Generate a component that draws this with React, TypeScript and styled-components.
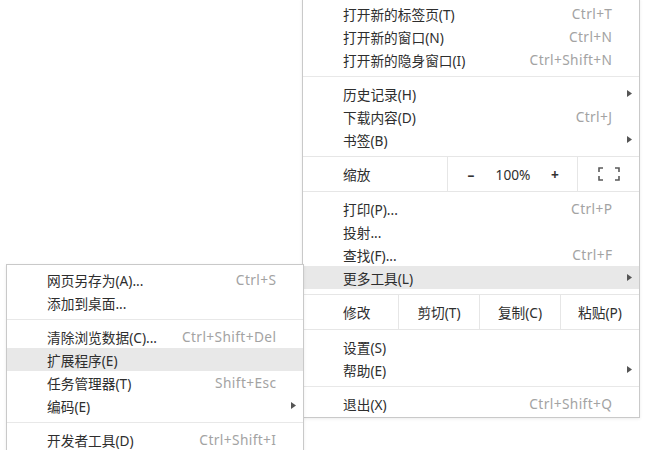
import React from "react";
import styled, { createGlobalStyle } from "styled-components";

const GlobalStyle = createGlobalStyle`
  html, body { margin: 0; padding: 0; background: #ffffff; }
  body {
    font-family: "Noto Sans", "Noto Sans CJK SC", sans-serif;
    -webkit-font-smoothing: antialiased;
  }
`;

const Desktop = styled.div`
  position: relative;
  width: 650px;
  height: 450px;
  overflow: hidden;
  background: #ffffff;
`;

const Menu = styled.div<{ $left: number; $top: number; $width: number; $z: number }>`
  position: absolute;
  left: ${(p) => p.$left}px;
  top: ${(p) => p.$top}px;
  width: ${(p) => p.$width}px;
  z-index: ${(p) => p.$z};
  box-sizing: border-box;
  background: #ffffff;
  border: 1px solid #c9c9c9;
  box-shadow: 0 1px 3px rgba(0, 0, 0, 0.08);
  font-size: 13.7px;
  color: #2e2e2e;
`;

const Group = styled.div`
  padding: 5px 0;
  &:first-child { padding-top: 3px; }
  &:last-child { padding-bottom: 2px; }
`;

const Separator = styled.div`
  height: 1px;
  background: #e8e8e8;
`;

const Item = styled.div<{ $active?: boolean }>`
  display: grid;
  grid-template-columns: 1fr auto 20px;
  align-items: center;
  height: 23px;
  padding: 0 7px 0 40px;
  background: ${(p) => (p.$active ? "#e8e8e8" : "transparent")};
  white-space: nowrap;
`;

const Label = styled.span``;

const Shortcut = styled.span`
  color: #a3a3a3;
  letter-spacing: 0.4px;
  margin-right: -0.4px;
`;

const ArrowCell = styled.span`
  display: flex;
  justify-content: flex-end;
  align-items: center;
`;

const ButtonRow = styled.div<{ $cols: string }>`
  display: grid;
  grid-template-columns: ${(p) => p.$cols};
  height: 34px;
  border-top: 1px solid #e6e6e6;
  border-bottom: 1px solid #e6e6e6;
`;

const RowLabel = styled.div`
  display: flex;
  align-items: center;
  padding-left: 40px;
`;

const Cell = styled.div`
  display: flex;
  align-items: center;
  justify-content: center;
  border-left: 1px solid #e6e6e6;
  white-space: nowrap;
`;

const ZoomControls = styled.div`
  display: grid;
  grid-template-columns: repeat(3, 42px);
  justify-items: center;
  align-items: center;
  padding-left: 1px;
`;

const ZoomSign = styled.span`
  font-weight: 700;
  color: #333333;
`;

const Arrow = () => (
  <svg width="5" height="7" viewBox="0 0 5 7">
    <path d="M0 0L5 3.5L0 7Z" fill="#555555" />
  </svg>
);

const FullscreenIcon = () => (
  <svg width="22" height="14" viewBox="0 0 22 14" fill="none" stroke="#5a5a5a" strokeWidth="1.6">
    <path d="M1 5V1H5" />
    <path d="M17 1H21V5" />
    <path d="M1 9V13H5" />
    <path d="M17 13H21V9" />
  </svg>
);

type Entry = { label: string; shortcut?: string; sub?: boolean; active?: boolean };

const MenuItem = ({ label, shortcut, sub, active }: Entry) => (
  <Item $active={active}>
    <Label>{label}</Label>
    <Shortcut>{shortcut ?? ""}</Shortcut>
    <ArrowCell>{sub ? <Arrow /> : null}</ArrowCell>
  </Item>
);

const ItemGroup = ({ items }: { items: Entry[] }) => (
  <Group>
    {items.map((it) => (
      <MenuItem key={it.label} {...it} />
    ))}
  </Group>
);

export default function App() {
  return (
    <>
      <GlobalStyle />
      <Desktop>
        <Menu $left={302} $top={-2} $width={338} $z={1}>
          <ItemGroup
            items={[
              { label: "打开新的标签页(T)", shortcut: "Ctrl+T" },
              { label: "打开新的窗口(N)", shortcut: "Ctrl+N" },
              { label: "打开新的隐身窗口(I)", shortcut: "Ctrl+Shift+N" },
            ]}
          />
          <Separator />
          <ItemGroup
            items={[
              { label: "历史记录(H)", sub: true },
              { label: "下载内容(D)", shortcut: "Ctrl+J" },
              { label: "书签(B)", sub: true },
            ]}
          />
          <ButtonRow $cols="144px 130px 1fr">
            <RowLabel>缩放</RowLabel>
            <Cell>
              <ZoomControls>
                <ZoomSign>–</ZoomSign>
                <span>100%</span>
                <ZoomSign>+</ZoomSign>
              </ZoomControls>
            </Cell>
            <Cell>
              <FullscreenIcon />
            </Cell>
          </ButtonRow>
          <ItemGroup
            items={[
              { label: "打印(P)...", shortcut: "Ctrl+P" },
              { label: "投射..." },
              { label: "查找(F)...", shortcut: "Ctrl+F" },
              { label: "更多工具(L)", sub: true, active: true },
            ]}
          />
          <ButtonRow $cols="95px 81px 81px 1fr">
            <RowLabel>修改</RowLabel>
            <Cell>剪切(T)</Cell>
            <Cell>复制(C)</Cell>
            <Cell>粘贴(P)</Cell>
          </ButtonRow>
          <ItemGroup
            items={[
              { label: "设置(S)" },
              { label: "帮助(E)", sub: true },
            ]}
          />
          <Separator />
          <ItemGroup items={[{ label: "退出(X)", shortcut: "Ctrl+Shift+Q" }]} />
        </Menu>

        <Menu $left={6} $top={264} $width={298} $z={2}>
          <ItemGroup
            items={[
              { label: "网页另存为(A)...", shortcut: "Ctrl+S" },
              { label: "添加到桌面..." },
            ]}
          />
          <Separator />
          <ItemGroup
            items={[
              { label: "清除浏览数据(C)...", shortcut: "Ctrl+Shift+Del" },
              { label: "扩展程序(E)", active: true },
              { label: "任务管理器(T)", shortcut: "Shift+Esc" },
              { label: "编码(E)", sub: true },
            ]}
          />
          <Separator />
          <ItemGroup items={[{ label: "开发者工具(D)", shortcut: "Ctrl+Shift+I" }]} />
        </Menu>
      </Desktop>
    </>
  );
}
